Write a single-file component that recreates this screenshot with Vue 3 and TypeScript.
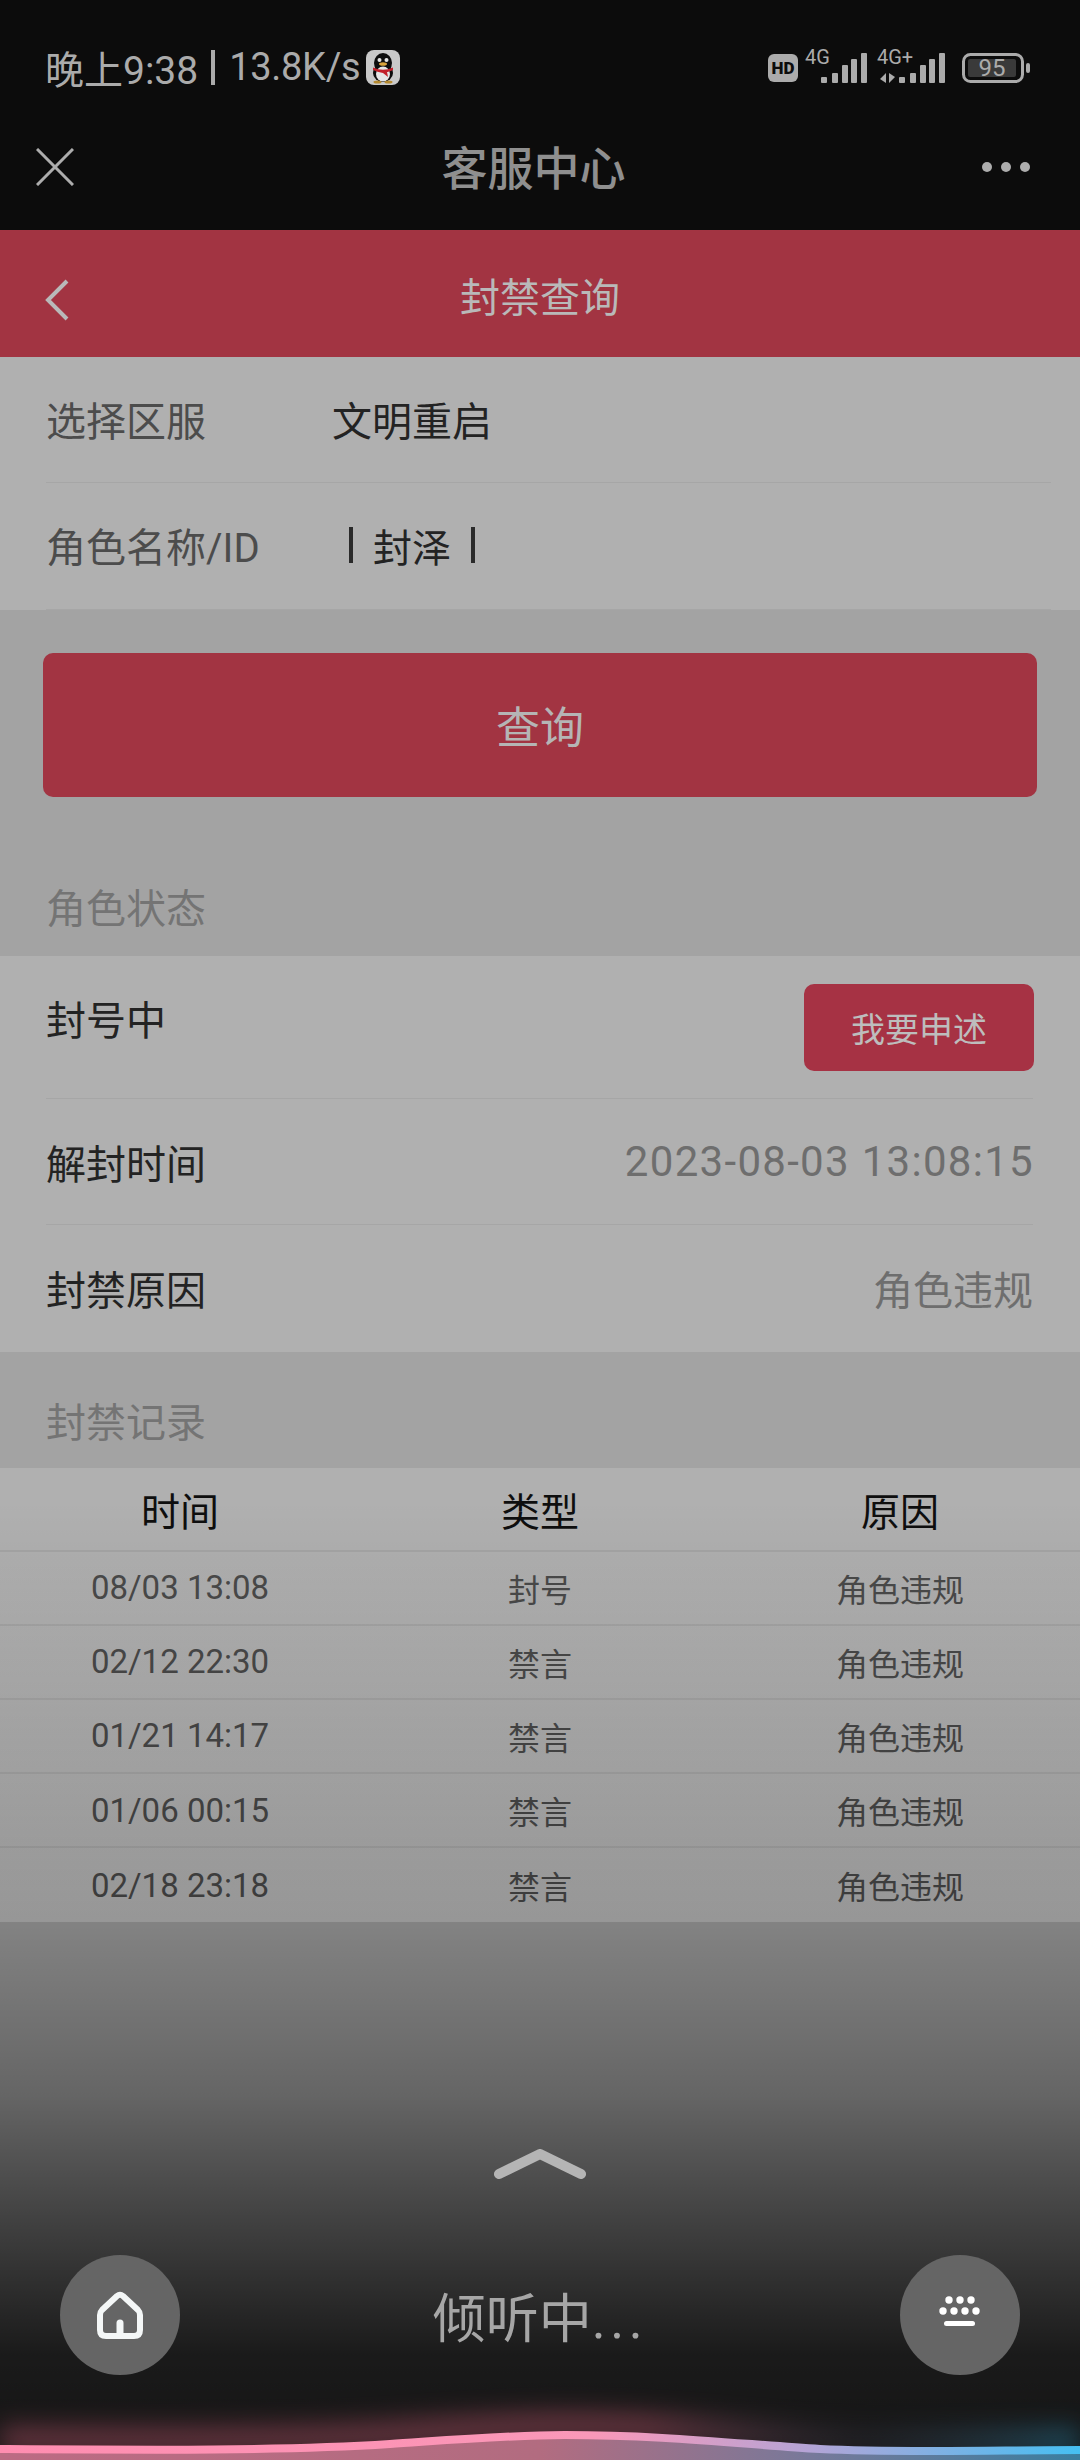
<script setup lang="ts">
interface Record {
  time: string
  type: string
  reason: string
}

const records: Record[] = [
  { time: "08/03 13:08", type: "封号", reason: "角色违规" },
  { time: "02/12 22:30", type: "禁言", reason: "角色违规" },
  { time: "01/21 14:17", type: "禁言", reason: "角色违规" },
  { time: "01/06 00:15", type: "禁言", reason: "角色违规" },
  { time: "02/18 23:18", type: "禁言", reason: "角色违规" },
]

// signal bars, x offset and top of each one
const bars = [
  { x: 0, y: 30 },
  { x: 11, y: 26 },
  { x: 21, y: 18 },
  { x: 30, y: 12 },
  { x: 40, y: 6 },
]
</script>

<template>
  <div class="page">
    <div class="top-bar">
      <div class="status">
        <span class="status-text clock">晚上9:38</span>
        <i class="status-sep" />
        <span class="status-text">13.8K/s</span>
        <svg class="qq" width="34" height="35" viewBox="0 0 34 35">
          <rect width="34" height="35" rx="8" fill="#c9c9c9" />
          <ellipse cx="17" cy="13" rx="9" ry="10" fill="#0d0d0d" />
          <ellipse cx="17" cy="23" rx="10" ry="9" fill="#0d0d0d" />
          <ellipse cx="17" cy="24" rx="7" ry="7.500" fill="#e6e6e6" />
          <circle cx="13.500" cy="10" r="2" fill="#e6e6e6" />
          <circle cx="20.500" cy="10" r="2" fill="#e6e6e6" />
          <ellipse cx="17" cy="14" rx="4" ry="1.800" fill="#d9a33a" />
          <path d="M7 17.500 Q17 22 27 17.500 L27 20 Q22 22 21 22 L22 27 L17 23 Q11 22 7 20 Z" fill="#c2202a" />
          <ellipse cx="11.500" cy="32" rx="4" ry="1.500" fill="#b58a30" />
          <ellipse cx="22.500" cy="32" rx="4" ry="1.500" fill="#b58a30" />
        </svg>
        <svg class="indicators" width="262" height="60" viewBox="0 -10 262 60">
          <rect x="0" y="7" width="30" height="28" rx="6" fill="#ababab" />
          <text x="15" y="27" class="hd">HD</text>
          <text x="37" y="17" class="net">4G</text>
          <rect
            v-for="b in bars"
            :key="'a' + b.x"
            :x="53 + b.x"
            :y="b.y"
            width="6"
            :height="36 - b.y"
            rx="1"
            fill="#ababab"
          />
          <text x="109" y="17" class="net">4G+</text>
          <path d="M118 26v10l-6-4zM121 36V26l6 4z" fill="#ababab" />
          <rect
            v-for="b in bars"
            :key="'b' + b.x"
            :x="131 + b.x"
            :y="b.y"
            width="6"
            :height="36 - b.y"
            rx="1"
            fill="#ababab"
          />
          <rect x="195.500" y="7.500" width="59" height="27" rx="7" fill="none" stroke="#ababab" stroke-width="3" />
          <rect x="200" y="12" width="48" height="18" rx="2" fill="#3a3a3a" />
          <text x="224" y="29" class="batt">95</text>
          <rect x="258" y="16" width="4" height="10" rx="2" fill="#ababab" />
        </svg>
      </div>
      <div class="webview-bar">
        <svg class="close" width="38" height="38" viewBox="0 0 38 38">
          <path d="M1 1L37 37M37 1L1 37" stroke="#adadad" stroke-width="3" fill="none" />
        </svg>
        <span class="webview-title">客服中心</span>
        <svg class="dots" width="50" height="12" viewBox="0 0 50 12">
          <circle cx="6" cy="6" r="5" fill="#adadad" />
          <circle cx="25" cy="6" r="5" fill="#adadad" />
          <circle cx="44" cy="6" r="5" fill="#adadad" />
        </svg>
      </div>
    </div>

    <div class="header">
      <svg class="back" width="26" height="42" viewBox="0 0 26 42">
        <path d="M23 2L4 21L23 40" stroke="#b9b9b9" stroke-width="4" fill="none" />
      </svg>
      <span class="header-title">封禁查询</span>
    </div>

    <div class="panel form">
      <div class="form-row">
        <span class="form-label">选择区服</span>
        <span class="form-value">文明重启</span>
      </div>
      <div class="form-row last">
        <span class="form-label">角色名称/ID</span>
        <span class="form-value input"><i class="caret" />封泽<i class="caret" /></span>
      </div>
    </div>

    <div class="query-wrap">
      <button class="query">查询</button>
    </div>

    <div class="section-title first">角色状态</div>
    <div class="panel info">
      <div class="info-row top">
        <span class="info-label">封号中</span>
        <button class="appeal">我要申述</button>
      </div>
      <div class="info-row">
        <span class="info-label">解封时间</span>
        <span class="info-value date">2023-08-03 13:08:15</span>
      </div>
      <div class="info-row last">
        <span class="info-label">封禁原因</span>
        <span class="info-value">角色违规</span>
      </div>
    </div>

    <div class="section-title second">封禁记录</div>
    <div class="panel table">
      <div class="table-head">
        <span>时间</span>
        <span>类型</span>
        <span>原因</span>
      </div>
      <div v-for="r in records" :key="r.time" class="table-row">
        <span class="time">{{ r.time }}</span>
        <span>{{ r.type }}</span>
        <span>{{ r.reason }}</span>
      </div>
    </div>

    <div class="shade" />

    <div class="voice">
      <svg class="expand" width="92" height="30" viewBox="0 0 92 30">
        <path d="M5 25L46 5L87 25" stroke="#b5b5b5" stroke-width="10" stroke-linecap="round" stroke-linejoin="round" fill="none" />
      </svg>
      <div class="voice-row">
        <div class="round">
          <svg width="46" height="48" viewBox="0 0 46 48">
            <path
              d="M5 19L20 5Q23 2.500 26 5L41 19Q43 21 43 24V39Q43 45 37 45H9Q3 45 3 39V24Q3 21 5 19Z"
              fill="none"
              stroke="#f4f7f7"
              stroke-width="6"
              stroke-linejoin="round"
            />
            <path d="M23 32V44" stroke="#f4f7f7" stroke-width="7" stroke-linecap="round" />
          </svg>
        </div>
        <span class="listening">倾听中<span class="ellipsis">...</span></span>
        <div class="round">
          <svg width="42" height="38" viewBox="0 0 42 38">
            <circle cx="10" cy="4" r="3.700" fill="#fff" />
            <circle cx="21" cy="4" r="3.700" fill="#fff" />
            <circle cx="32" cy="4" r="3.700" fill="#fff" />
            <circle cx="4" cy="15" r="3.700" fill="#fff" />
            <circle cx="15" cy="15" r="3.700" fill="#fff" />
            <circle cx="26" cy="15" r="3.700" fill="#fff" />
            <circle cx="37" cy="15" r="3.700" fill="#fff" />
            <rect x="5" y="25" width="31" height="5" rx="2.500" fill="#fff" />
          </svg>
        </div>
      </div>
      <svg class="wave" width="1080" height="110" viewBox="0 0 1080 110">
        <defs>
          <linearGradient id="waveLine" x1="0" x2="1" y1="0" y2="0">
            <stop offset="0" stop-color="#ff8db0" />
            <stop offset="0.55" stop-color="#fa98b8" />
            <stop offset="0.75" stop-color="#b4a4d6" />
            <stop offset="1" stop-color="#45bff2" />
          </linearGradient>
          <linearGradient id="waveFill" x1="0" x2="1" y1="0" y2="0">
            <stop offset="0" stop-color="#bb6b83" />
            <stop offset="0.5" stop-color="#b26c80" />
            <stop offset="0.75" stop-color="#77799a" />
            <stop offset="1" stop-color="#3a7ea0" />
          </linearGradient>
          <linearGradient id="waveGlow" x1="0" x2="1" y1="0" y2="0">
            <stop offset="0" stop-color="#ff6f8f" />
            <stop offset="0.6" stop-color="#ff6f8f" />
            <stop offset="0.8" stop-color="#6f6f90" stop-opacity="0.4" />
            <stop offset="1" stop-color="#2fb4e8" />
          </linearGradient>
          <filter id="blur" x="-100" y="-60" width="1280" height="230" filterUnits="userSpaceOnUse">
            <feGaussianBlur stdDeviation="13" />
          </filter>
        </defs>
        <path
          d="M0 90C150 91 280 92 390 85C450 81 510 76 565 76C660 76 740 85 820 90C900 94 1000 91 1080 91"
          fill="none"
          stroke="url(#waveGlow)"
          stroke-width="26"
          opacity="0.36"
          filter="url(#blur)"
        />
        <path
          d="M0 99C150 100 280 101 390 94C450 90 510 85 565 85C660 85 740 94 820 99C900 103 1000 100 1080 100V110H0Z"
          fill="url(#waveFill)"
        />
        <path
          d="M0 99C150 100 280 101 390 94C450 90 510 85 565 85C660 85 740 94 820 99C900 103 1000 100 1080 100"
          fill="none"
          stroke="url(#waveLine)"
          stroke-width="8"
        />
      </svg>
    </div>
  </div>
</template>

<style>
html,
body {
  margin: 0;
  background: #0c0c0c;
}
</style>

<style scoped>
.page {
  position: relative;
  width: 1080px;
  height: 2460px;
  overflow: hidden;
  background: #a3a3a3;
  display: flex;
  flex-direction: column;
  font-family: Roboto, "Noto Sans CJK SC", sans-serif;
}

.top-bar {
  height: 230px;
  background: #0c0c0c;
  display: flex;
  flex-direction: column;
  padding: 0 42px 0 36px;
  box-sizing: border-box;
}

.status {
  height: 134px;
  display: flex;
  align-items: center;
  padding: 0 0 0 9px;
  color: #ababab;
}

.status-text {
  font-size: 38px;
  letter-spacing: -0.300px;
}

.status-text.clock {
  font-size: 39px;
  letter-spacing: 0;
}

.status-sep {
  width: 4px;
  height: 35px;
  background: #ababab;
  margin: 0 14px 0 13px;
}

.qq {
  margin-left: 6px;
}

.indicators {
  margin-left: auto;
  margin-right: 8px;
}

.hd {
  font-size: 17px;
  font-weight: 900;
  fill: #0c0c0c;
  text-anchor: middle;
}

.net {
  font-size: 20px;
  fill: #ababab;
}

.batt {
  font-size: 24px;
  fill: #ababab;
  text-anchor: middle;
}

.webview-bar {
  display: flex;
  align-items: center;
  justify-content: space-between;
  height: 66px;
}

.webview-title {
  font-size: 46px;
  color: #8f8f8f;
  font-weight: 500;
  margin: 0 0 4px 12px;
}

.dots {
  margin-right: 7px;
}

.header {
  position: relative;
  height: 127px;
  background: #a23442;
  display: flex;
  align-items: center;
  justify-content: center;
  color: #b9b9b9;
  font-size: 40px;
}

.header-title {
  margin-top: 2px;
}

.back {
  position: absolute;
  left: 44px;
  top: 49px;
}

.panel {
  background: #b0b0b0;
}

.form-row {
  height: 126px;
  margin: 0 29px 0 46px;
  padding-bottom: 2px;
  border-bottom: 1px solid #a6a6a6;
  box-sizing: border-box;
  display: flex;
  align-items: center;
  font-size: 40px;
}

.form-row.last {
  height: 127px;
}

.form-label {
  width: 286px;
  color: #4c4c4c;
}

.form-value {
  color: #232323;
}

.form-value.input {
  display: flex;
  align-items: center;
  margin-left: 17px;
  gap: 20px;
  font-size: 39px;
}

.caret {
  width: 4px;
  height: 36px;
  background: #2a2a2a;
}

.query-wrap {
  padding: 43px 43px 0;
}

.query {
  display: block;
  width: 100%;
  height: 144px;
  border: 0;
  border-radius: 10px;
  background: #a23442;
  color: #b5b5b5;
  font-family: inherit;
  font-size: 44px;
}

.section-title {
  color: #747474;
  font-size: 40px;
  padding-left: 46px;
  display: flex;
  align-items: center;
}

.section-title.first {
  height: 159px;
  padding-top: 59px;
  box-sizing: border-box;
}

.section-title.second {
  height: 116px;
  padding-top: 19px;
  box-sizing: border-box;
}

.info-row {
  height: 126px;
  margin: 0 47px 0 46px;
  border-bottom: 1px solid #a6a6a6;
  box-sizing: border-box;
  display: flex;
  align-items: center;
  justify-content: space-between;
  font-size: 40px;
}

.info-row.top {
  height: 143px;
  align-items: flex-start;
  padding-top: 28px;
}

.info-row.top .info-label {
  margin-top: 5px;
}

.info-row.last {
  height: 127px;
  padding-bottom: 2px;
  border-bottom: 0;
}

.info-label {
  color: #232323;
}

.info-value {
  color: #6e6e6e;
}

.info-value.date {
  font-size: 42px;
  letter-spacing: 1.300px;
  margin-right: -1px;
}

.appeal {
  width: 230px;
  height: 87px;
  margin-right: -1px;
  border: 0;
  border-radius: 10px;
  background: #a63244;
  color: #bdbdbd;
  font-family: inherit;
  font-size: 34px;
}

.table {
  background: linear-gradient(to bottom, #b0b0b0 20%, #bcbcbc 100%);
}

.table-head,
.table-row {
  display: grid;
  grid-template-columns: repeat(3, 1fr);
  align-items: center;
  text-align: center;
  box-sizing: border-box;
  border-bottom: 2px solid rgba(0, 0, 0, 0.06);
}

.table-head {
  height: 83.500px;
  font-size: 39px;
  color: #0e0e0e;
}

.table-row {
  height: 74.200px;
  font-size: 32px;
  color: #4a4a4a;
}

.table-row .time {
  font-size: 33px;
}

.table-row:last-child {
  border-bottom: 0;
}

.shade {
  position: absolute;
  left: 0;
  right: 0;
  top: 1500px;
  bottom: 0;
  background: linear-gradient(
    to bottom,
    rgba(0, 0, 0, 0) 0%,
    rgba(0, 0, 0, 0.2) 44%,
    rgba(0, 0, 0, 0.38) 62%,
    rgba(0, 0, 0, 0.84) 89%,
    rgba(0, 0, 0, 0.88) 100%
  );
  pointer-events: none;
}

.voice {
  position: relative;
  z-index: 1;
  flex: 1;
  display: flex;
  flex-direction: column;
  align-items: center;
}

.expand {
  margin-top: 227px;
}

.voice-row {
  width: 960px;
  margin-top: 76px;
  display: flex;
  align-items: center;
  justify-content: space-between;
}

.round {
  width: 120px;
  height: 120px;
  border-radius: 50%;
  background: #656565;
  display: flex;
  align-items: center;
  justify-content: center;
}

.listening {
  font-size: 53px;
  color: #a6a6a6;
}

.ellipsis {
  letter-spacing: 4.500px;
}

.wave {
  position: absolute;
  left: 0;
  bottom: 0;
}
</style>
